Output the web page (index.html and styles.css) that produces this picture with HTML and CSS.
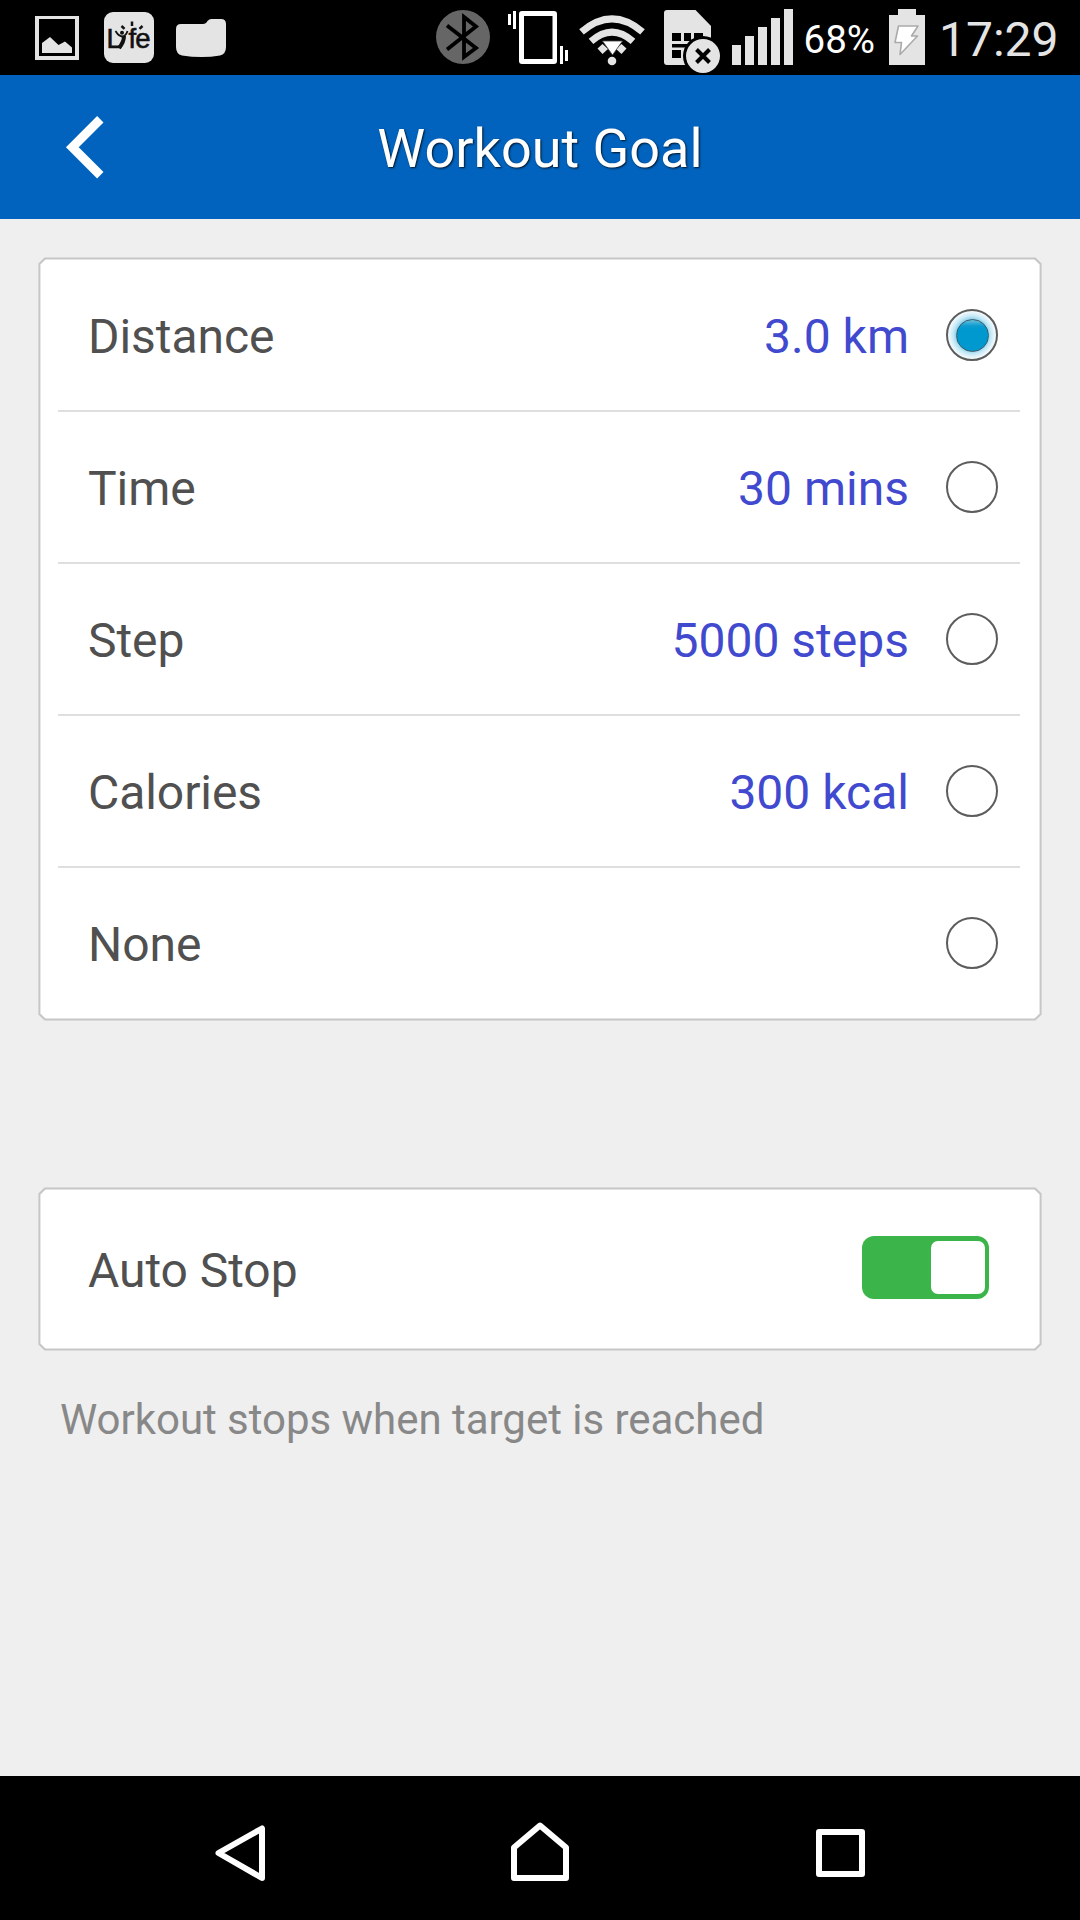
FILE: index.html
```html
<!DOCTYPE html>
<html lang="en">
<head>
<meta charset="utf-8">
<title>Workout Goal</title>
<link rel="stylesheet" href="styles.css">
</head>
<body>
<div class="screen">
  <div class="status">
    <div class="status-group notifications">
      <svg width="44" height="75" viewBox="35 0 44 75"><path fill="#e4e4e4" fill-rule="evenodd" d="M35 16h44v44H35zM39 19v37h36V19z"/><path fill="#e4e4e4" d="M42 53V43l8-6 8.500 8 6.500-3.500 7 6V53z"/></svg>
      <svg width="50" height="75" viewBox="104 0 50 75">
        <rect x="104" y="12" width="50" height="51" rx="9" fill="#e4e4e4"/>
        <text class="lyfe" y="47.500" x="106.500 128.500 135.200">Lfe</text>
        <g fill="none" stroke="#111"><path stroke-width="1.800" d="M115.500 31q3 5 6.500 5.500Q126 36 127.500 31"/><path stroke-width="4" d="M124 36q0 6-5 12"/><path stroke-width="2.500" d="M132 21.500v4.500M121.500 26l3 2.800M142.500 26l-3 2.800"/></g>
        <circle cx="122" cy="32.700" r="2" fill="#111"/>
      </svg>
      <svg width="50" height="75" viewBox="176 0 50 75"><path fill="#e4e4e4" d="M181 24h22q3 0 4.500-3 1.500-2 4-2H221q5 0 5 5v23q0 7-6 8.500-18 3-38 0-6-1.500-6-8.500V29q0-5 5-5z"/></svg>
    </div>
    <div class="status-group system">
      <svg class="bt" width="54" height="75" viewBox="436 0 54 75"><circle cx="463" cy="37" r="27" fill="#666"/><path fill="none" stroke="#000" stroke-width="3.800" d="M447 25.500 476 48 464 57V17L476 26.500 447 49.500"/></svg>
      <svg class="vib" width="60" height="75" viewBox="508 0 60 75"><path fill="#fff" fill-rule="evenodd" d="M522 11h32q3 0 3 3v47q0 3-3 3H522q-3 0-3-3V14q0-3 3-3zM524 16v43h28.500V16z"/><path fill="#fff" d="M508 14h3v11h-3zM513 11h3v18h-3zM560 46h3v18h-3zM565 50h3v11h-3z"/></svg>
      <svg class="wifi" width="66" height="75" viewBox="579 0 66 75"><g fill="none" stroke="#e4e4e4"><path stroke-width="7" d="M581.500 31.800q30.500-26 61 0"/><path stroke-width="7" d="M591 41.300q21-18.500 42 0"/></g><path fill="#e4e4e4" d="m597.500 48.500 5-4.500 5.500 5-5.500 5zM626.500 48.500l-5-4.500-5.500 5 5.500 5z"/><path d="M602.500 41h20L612.500 55z" fill="#fff" stroke="#444" stroke-width=".8"/><circle cx="612" cy="61" r="4.300" fill="#e4e4e4"/></svg>
      <svg class="sim" width="56" height="75" viewBox="664 0 56 75"><path fill="#e4e4e4" d="M667 10h28.500L711 26v36q0 3-3 3H667q-3 0-3-3V13q0-3 3-3z"/><path d="M672 33h9v8h-9zM684 33h7v8h-7zM694 33h9v8h-9zM672 44h22v3.500h-22zM672 50h9v8h-9z"/><circle cx="703" cy="56" r="20"/><circle cx="703" cy="56" r="17" fill="#e4e4e4"/><path d="m696.500 49.500 13 13m0-13-13 13" fill="none" stroke="#000" stroke-width="4"/></svg>
      <svg class="signal" width="61" height="75" viewBox="732 0 61 75"><path fill="#e4e4e4" d="M732 45h9v20h-9zM745 36h9v29h-9zM758 27h9v38h-9zM771 18h9v47h-9zM784 9h9v56h-9z"/></svg>
      <span class="percent">68%</span>
      <svg class="battery" width="36" height="75" viewBox="889 0 36 75"><path fill="#e4e4e4" d="M898 9h18v6h9v50H889V15h9z"/><path fill="#fff" stroke="#aaa" stroke-width="1.600" stroke-linejoin="round" d="M898.500 26h19.500l-6.500 10h6L900 54.500l1.500-12h-6.500z"/></svg>
      <span class="clock">17:29</span>
    </div>
  </div>

  <header class="header">
    <svg class="back" width="48" height="72" viewBox="60 111 48 72"><path fill="none" stroke="#fff" stroke-width="9" d="m100.300 119.200-28 28 28 28"/></svg>
    <h1 class="title">Workout Goal</h1>
  </header>

  <main class="content">
    <section class="card">
      <div class="card-body goals">
        <div class="row"><span class="label">Distance</span><span class="value">3.0 km</span><span class="radio selected"></span></div>
        <div class="row"><span class="label">Time</span><span class="value">30 mins</span><span class="radio"></span></div>
        <div class="row"><span class="label">Step</span><span class="value">5000 steps</span><span class="radio"></span></div>
        <div class="row"><span class="label">Calories</span><span class="value">300 kcal</span><span class="radio"></span></div>
        <div class="row"><span class="label">None</span><span class="value"></span><span class="radio"></span></div>
      </div>
    </section>
    <section class="card auto-stop">
      <div class="card-body auto-body">
        <span class="label">Auto Stop</span><span class="toggle"><span class="knob"></span></span>
      </div>
    </section>
    <p class="hint">Workout stops when target is reached</p>
  </main>

  <nav class="navbar">
    <svg width="50" height="64" viewBox="215 1820 50 64"><path fill="none" stroke="#fff" stroke-width="6" stroke-linejoin="round" d="M262 1828.500v49.500L218.500 1853z"/></svg>
    <svg width="58" height="64" viewBox="511 1820 58 64"><path fill="none" stroke="#fff" stroke-width="6" stroke-linejoin="round" d="M514 1847.500 540 1825.500 566 1847.500V1878H514z"/></svg>
    <svg width="50" height="64" viewBox="816 1820 50 64"><rect x="819" y="1832" width="43" height="42" fill="none" stroke="#fff" stroke-width="6" stroke-linejoin="round"/></svg>
  </nav>
</div>
</body>
</html>
```
FILE: styles.css
```css
* { box-sizing: border-box; }
body { margin: 0; font-family: Roboto, sans-serif; }
svg { display: block; flex: none; }

.screen {
  width: 1080px;
  height: 1920px;
  display: flex;
  flex-direction: column;
  background: #efefef;
}

/* Status bar */
.status {
  height: 75px;
  padding: 0 24px 0 35px;
  display: flex;
  justify-content: space-between;
  background: #000;
}
.status-group { display: flex; align-items: center; }
.notifications svg + svg { margin-left: 25px; }
.notifications svg:last-child { margin-left: 22px; }
.lyfe { font: 27.500px "Liberation Sans", sans-serif; fill: #111; stroke: #111; stroke-width: .6px; }
.system { width: 620px; }
.vib { margin-left: 18px; }
.wifi { margin-left: 11px; }
.sim { margin-left: 19px; }
.signal { margin-left: 12px; }
.percent { flex: none; width: 73px; margin-left: 10.500px; padding-top: 4px; font-size: 38.500px; line-height: 45px; color: #fff; white-space: nowrap; }
.battery { margin-left: 12.500px; }
.clock { flex: none; margin-left: 14px; padding-top: 4px; font-size: 48px; line-height: 56px; color: #e4e4e4; white-space: nowrap; }

/* Title bar */
.header {
  height: 144px;
  padding: 0 60px;
  display: grid;
  grid-template-columns: 48px 1fr 48px;
  align-items: center;
  background: #0163be;
}
.title {
  margin: 0;
  padding-top: 3px;
  font-size: 54px;
  line-height: 64px;
  font-weight: 400;
  text-align: center;
  color: #fff;
  text-shadow: 1px 1px 2px rgba(0, 0, 0, .8);
}

/* Cards */
.content { flex: 1; padding: 38px 38px 0; }
.card, .card-body {
  --e: 0.400px;
  --c: 6.500px;
  clip-path: polygon(
    var(--c) var(--e), calc(100% - var(--c)) var(--e),
    calc(100% - var(--e)) var(--c), calc(100% - var(--e)) calc(100% - var(--c)),
    calc(100% - var(--c)) calc(100% - var(--e)), var(--c) calc(100% - var(--e)),
    var(--e) calc(100% - var(--c)), var(--e) var(--c));
}
.card { padding: 2px; background: #c6c6c6; }
.card-body { --c: 5.500px; background: #fff; }
.goals { padding: 1px 20px 1px 18px; }
.row { height: 152px; display: flex; align-items: center; padding: 0 22px 0 30px; border-bottom: 2px solid #dfdfdf; }
.row:last-child { height: 150px; border-bottom: 0; }
.label { flex: 1; padding-top: 3px; font-size: 48px; line-height: 56px; letter-spacing: -.06px; color: #505050; }
.value { padding-top: 3px; font-size: 48px; line-height: 56px; color: #414acf; }
.radio {
  width: 52px;
  height: 52px;
  margin-left: 37px;
  display: grid;
  place-items: center;
  border: 2px solid #5c5c5c;
  border-radius: 50%;
}
.radio.selected { background: radial-gradient(circle closest-side, #7fcdea 15px, #c6e9f6 19px, #f7fcfe 24px); }
.radio.selected::after {
  content: "";
  width: 31px;
  height: 31px;
  border: 1.500px solid #3d5a66;
  border-radius: 50%;
  background: linear-gradient(#67bfde 0, #0c9bd0 6px, #0099cf 9px);
}

.auto-stop { margin-top: 166px; }
.auto-body { height: 160px; display: flex; align-items: center; padding: 0 51px 0 48px; }
.toggle {
  width: 127px;
  height: 63px;
  margin-bottom: 3px;
  padding: 5px 4px;
  display: flex;
  justify-content: flex-end;
  border-radius: 12px;
  background: #3bb54a;
}
.knob { width: 54px; height: 53px; border-radius: 7px; background: #fff; }
.hint { margin: 44px 0 0; padding-left: 22px; font-size: 42px; line-height: 50px; letter-spacing: -.03px; color: #888; }

/* Navigation bar */
.navbar {
  height: 144px;
  padding: 44px 214px 36px 215px;
  display: grid;
  grid-template-columns: 296px 305px 50px;
  background: #000;
}
```
